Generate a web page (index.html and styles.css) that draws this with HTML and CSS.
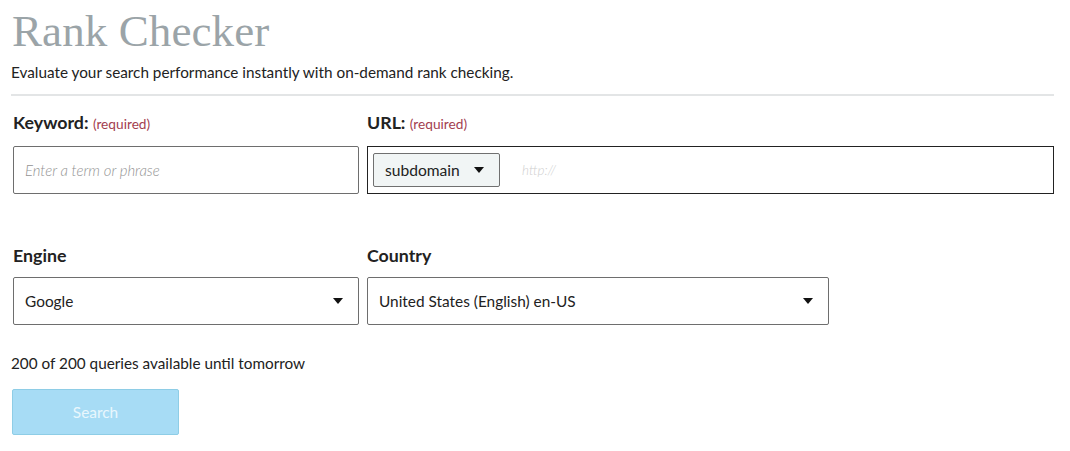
FILE: index.html
```html
<!DOCTYPE html>
<html lang="en">
<head>
<meta charset="utf-8">
<title>Rank Checker</title>
<link rel="stylesheet" href="styles.css">
</head>
<body>
<main class="page">
  <h1 class="title">Rank Checker</h1>
  <p class="subtitle">Evaluate your search performance instantly with on-demand rank checking.</p>
  <hr class="rule">
  <form class="form">
    <div class="row row-top">
      <div class="field field-keyword">
        <label class="label">Keyword: <span class="req">(required)</span></label>
        <div class="box input"><span class="placeholder">Enter a term or phrase</span></div>
      </div>
      <div class="field field-url">
        <label class="label">URL: <span class="req">(required)</span></label>
        <div class="box url">
          <div class="mini-select">subdomain <span class="caret"></span></div>
          <span class="placeholder light">http://</span>
        </div>
      </div>
    </div>
    <div class="row row-bottom">
      <div class="field field-engine">
        <label class="label">Engine</label>
        <div class="box select"><span>Google</span><span class="caret"></span></div>
      </div>
      <div class="field field-country">
        <label class="label">Country</label>
        <div class="box select"><span>United States (English) en-US</span><span class="caret"></span></div>
      </div>
    </div>
    <p class="quota">200 of 200 queries available until tomorrow</p>
    <button type="button" class="btn">Search</button>
  </form>
</main>
</body>
</html>
```
FILE: styles.css
```css
html, body {
  margin: 0;
  padding: 0;
  background: #fff;
}
body {
  font-family: Lato, "Open Sans", sans-serif;
  color: #222;
}
.page {
  padding: 0 16px 0 12px;
}
.title {
  margin: 9px 0 0 0;
  font-family: "Liberation Serif", serif;
  font-weight: normal;
  font-size: 45px;
  line-height: 45px;
  color: #9ba4a8;
  letter-spacing: 0.1px;
}
.subtitle {
  margin: 8px 0 0 -1px;
  font-size: 15.3px;
  line-height: 21px;
}
.rule {
  margin: 11px 0 0 -1px;
  border: 0;
  height: 2px;
  background: #e3e5e6;
}
.form {
  margin-left: 1px;
}
.row {
  display: flex;
  gap: 8px;
}
.row-top {
  margin-top: 16px;
}
.row-bottom {
  margin-top: 51px;
}
.field {
  display: flex;
  flex-direction: column;
}
.field-keyword, .field-engine {
  width: 346px;
}
.field-url {
  width: 687px;
}
.field-country {
  width: 462px;
}
.label {
  font-size: 17.8px;
  line-height: 20px;
  font-weight: bold;
  margin-bottom: 12px;
}
.req {
  font-weight: normal;
  font-size: 13.7px;
  color: #a3404f;
}
.box {
  box-sizing: border-box;
  height: 48px;
  border: 1px solid #6e6e6e;
  border-radius: 2px;
  display: flex;
  align-items: center;
  font-size: 15.4px;
}
.input {
  padding-left: 11px;
}
.placeholder {
  font-style: italic;
  color: #939393;
  font-weight: 300;
  font-size: 14.9px;
}
.placeholder.light {
  color: #cfcfcf;
  margin-left: 22px;
  font-size: 13.5px;
}
.url {
  border: 1.5px solid #222;
  border-radius: 0;
  padding-left: 5px;
}
.mini-select {
  box-sizing: border-box;
  height: 34px;
  width: 127px;
  background: #f1f5f5;
  border: 1px solid #707070;
  border-radius: 2px;
  display: flex;
  align-items: center;
  padding-left: 11px;
  gap: 14px;
  font-size: 15.6px;
}
.caret {
  width: 0;
  height: 0;
  border-left: 5px solid transparent;
  border-right: 5px solid transparent;
  border-top: 6px solid #111;
}
.select {
  justify-content: space-between;
  padding: 0 15px 0 11px;
}
.quota {
  margin: 28px 0 0 -2px;
  font-size: 15.3px;
  line-height: 20px;
}
.btn {
  display: block;
  margin: 16px 0 0 -1px;
  width: 167px;
  height: 46px;
  background: #a7dcf5;
  border: 1px solid #8ecde6;
  border-radius: 2px;
  color: #e9f7fd;
  font-family: Lato, sans-serif;
  font-size: 15.4px;
  padding: 0;
}
```
